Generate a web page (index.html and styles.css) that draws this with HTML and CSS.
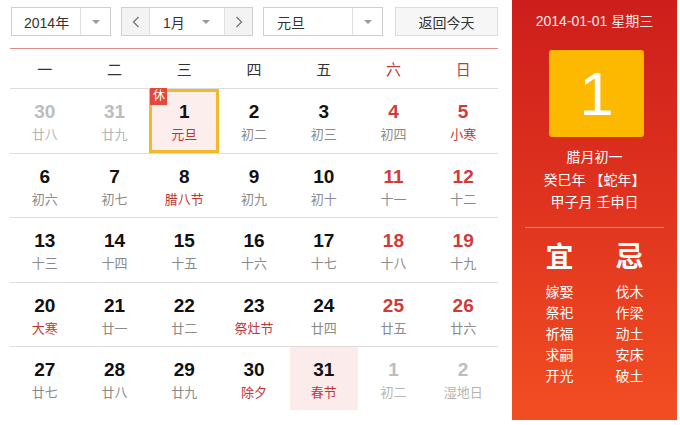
FILE: index.html
```html
<!DOCTYPE html>
<html lang="zh">
<head>
<meta charset="utf-8">
<title>万年历</title>
<link rel="stylesheet" href="styles.css">
</head>
<body>
<div class="page">
  <div class="main">
    <div class="toolbar">
      <div class="select year">
        <span class="sel-text">2014年</span>
        <span class="sel-arrow"><i class="tri"></i></span>
      </div>
      <div class="month-group">
        <span class="nav"><svg width="8" height="12" viewBox="0 0 8 12"><polyline points="6.5,1 1.5,6 6.5,11" fill="none" stroke="#777" stroke-width="1.3"/></svg></span>
        <span class="month-text">1月</span>
        <span class="month-arrow"><i class="tri"></i></span>
        <span class="nav"><svg width="8" height="12" viewBox="0 0 8 12"><polyline points="1.5,1 6.5,6 1.5,11" fill="none" stroke="#777" stroke-width="1.3"/></svg></span>
      </div>
      <div class="select holiday">
        <span class="sel-text">元旦</span>
        <span class="sel-arrow"><i class="tri"></i></span>
      </div>
      <button class="today-btn">返回今天</button>
    </div>

    <div class="weekdays">
      <span>一</span><span>二</span><span>三</span><span>四</span><span>五</span><span class="wk-red">六</span><span class="wk-red">日</span>
    </div>

    <div class="grid">
      <div class="row">
        <div class="cell other"><b>30</b><em>廿八</em></div>
        <div class="cell other"><b>31</b><em>廿九</em></div>
        <div class="cell today"><span class="badge">休</span><b>1</b><em class="fest">元旦</em></div>
        <div class="cell"><b>2</b><em>初二</em></div>
        <div class="cell"><b>3</b><em>初三</em></div>
        <div class="cell weekend"><b>4</b><em>初四</em></div>
        <div class="cell weekend"><b>5</b><em class="fest">小寒</em></div>
      </div>
      <div class="row">
        <div class="cell"><b>6</b><em>初六</em></div>
        <div class="cell"><b>7</b><em>初七</em></div>
        <div class="cell"><b>8</b><em class="fest">腊八节</em></div>
        <div class="cell"><b>9</b><em>初九</em></div>
        <div class="cell"><b>10</b><em>初十</em></div>
        <div class="cell weekend"><b>11</b><em>十一</em></div>
        <div class="cell weekend"><b>12</b><em>十二</em></div>
      </div>
      <div class="row">
        <div class="cell"><b>13</b><em>十三</em></div>
        <div class="cell"><b>14</b><em>十四</em></div>
        <div class="cell"><b>15</b><em>十五</em></div>
        <div class="cell"><b>16</b><em>十六</em></div>
        <div class="cell"><b>17</b><em>十七</em></div>
        <div class="cell weekend"><b>18</b><em>十八</em></div>
        <div class="cell weekend"><b>19</b><em>十九</em></div>
      </div>
      <div class="row">
        <div class="cell"><b>20</b><em class="fest">大寒</em></div>
        <div class="cell"><b>21</b><em>廿一</em></div>
        <div class="cell"><b>22</b><em>廿二</em></div>
        <div class="cell"><b>23</b><em class="fest">祭灶节</em></div>
        <div class="cell"><b>24</b><em>廿四</em></div>
        <div class="cell weekend"><b>25</b><em>廿五</em></div>
        <div class="cell weekend"><b>26</b><em>廿六</em></div>
      </div>
      <div class="row last">
        <div class="cell"><b>27</b><em>廿七</em></div>
        <div class="cell"><b>28</b><em>廿八</em></div>
        <div class="cell"><b>29</b><em>廿九</em></div>
        <div class="cell"><b>30</b><em class="fest">除夕</em></div>
        <div class="cell holiday-cell"><b>31</b><em class="fest">春节</em></div>
        <div class="cell other"><b>1</b><em>初二</em></div>
        <div class="cell other"><b>2</b><em>湿地日</em></div>
      </div>
    </div>
  </div>

  <aside class="side">
    <div class="side-date">2014-01-01 星期三</div>
    <div class="big-day">1</div>
    <div class="lunar">
      <div>腊月初一</div>
      <div>癸巳年 【蛇年】</div>
      <div>甲子月 壬申日</div>
    </div>
    <div class="divider"></div>
    <div class="yiji">
      <div class="col">
        <div class="yj-title">宜</div>
        <div>嫁娶</div><div>祭祀</div><div>祈福</div><div>求嗣</div><div>开光</div>
      </div>
      <div class="col">
        <div class="yj-title">忌</div>
        <div>伐木</div><div>作梁</div><div>动土</div><div>安床</div><div>破土</div>
      </div>
    </div>
  </aside>
</div>
</body>
</html>
```

FILE: styles.css
```css
* { box-sizing: border-box; }
html, body { margin: 0; padding: 0; background: #fff; }
body {
  width: 680px;
  height: 425px;
  overflow: hidden;
  font-family: "Liberation Sans", "Noto Sans CJK SC", sans-serif;
  color: #222;
}
.page {
  display: flex;
  padding-left: 10px;
}
.main { width: 488px; }

/* toolbar */
.toolbar {
  display: flex;
  align-items: stretch;
  padding-top: 7px;
  height: 36px;
  padding-left: 1px;
}
.select {
  display: flex;
  border: 1px solid #cfcfcf;
  background: #fff;
  font-size: 14px;
  color: #333;
}
.select.year { width: 100px; margin-right: 10px; }
.select.holiday { width: 120px; margin-right: 12px; }
.sel-text {
  flex: 1;
  display: flex;
  align-items: center;
  padding-left: 10px;
}
.year .sel-text { padding-left: 12px; }
.holiday .sel-text { padding-left: 13px; }
.sel-arrow {
  width: 30px;
  border-left: 1px solid #e0e0e0;
  display: flex;
  align-items: center;
  justify-content: center;
}
.tri {
  width: 0; height: 0;
  border-left: 4px solid transparent;
  border-right: 4px solid transparent;
  border-top: 4px solid #999;
}
.month-group {
  width: 132px;
  margin-right: 10px;
  display: flex;
  border: 1px solid #cfcfcf;
  font-size: 14px;
  color: #333;
}
.nav {
  width: 28px;
  background: #f3f3f3;
  display: flex;
  align-items: center;
  justify-content: center;
}
.nav:first-child { border-right: 1px solid #e0e0e0; }
.nav:last-child { border-left: 1px solid #e0e0e0; }
.month-text {
  flex: 1;
  display: flex;
  align-items: center;
  padding-left: 13px;
}
.month-arrow {
  width: 22px;
  display: flex;
  align-items: center;
  justify-content: flex-start;
}
.today-btn {
  width: 103px;
  border: 1px solid #dcdcdc;
  background: #f6f6f6;
  font-family: inherit;
  font-size: 14px;
  color: #333;
  padding: 0;
}

/* weekdays */
.weekdays {
  margin-top: 12px;
  border-top: 1px solid #dd8c8c;
  height: 40px;
  display: grid;
  grid-template-columns: repeat(7, 1fr);
  align-items: center;
  font-size: 15px;
  color: #333;
  text-align: center;
}
.wk-red { color: #c43a3a; }

/* grid */
.row {
  height: 64.5px;
  border-top: 1px solid #dcdcdc;
  display: grid;
  grid-template-columns: repeat(7, 1fr);
}
.cell {
  position: relative;
  display: flex;
  flex-direction: column;
  align-items: center;
  padding-top: 12px;
}
.cell b {
  font-size: 19px;
  line-height: 22px;
  font-weight: bold;
  color: #111;
}
.cell em {
  font-style: normal;
  font-size: 13px;
  line-height: 16px;
  margin-top: 4px;
  color: #8a8a8a;
}
.cell em.fest { color: #c23535; }
.cell.weekend b { color: #d03a3a; }
.cell.other b { color: #bdbdbd; }
.cell.other em { color: #b5b5b5; }
.cell.today {
  background: #fdeeee;
  box-shadow: inset 0 0 0 3px #f2b92c;
}
.cell.holiday-cell {
  background: #fcebeb;
  margin: 0 1px 1px 1px;
}
.badge {
  position: absolute;
  top: -1px;
  left: 1px;
  width: 17px;
  height: 17px;
  background: #e5483a;
  color: #fff;
  font-size: 12px;
  line-height: 17px;
  text-align: center;
}

/* side panel */
.side {
  margin-left: 14px;
  width: 165px;
  height: 420px;
  background: linear-gradient(to bottom, #cd1e1b 0%, #e0341f 50%, #f24e22 100%);
  color: #fff;
  display: flex;
  flex-direction: column;
  align-items: center;
}
.side-date {
  margin-top: 12px;
  font-size: 14px;
  line-height: 18px;
  color: #fbeaea;
}
.big-day {
  margin-top: 20px;
  width: 95px;
  height: 87px;
  background: #fdb900;
  border-radius: 3px;
  font-size: 62px;
  line-height: 87px;
  text-align: center;
  color: #fff;
  margin-left: 4px;
}
.lunar {
  margin-top: 9px;
  font-size: 14px;
  line-height: 22.5px;
  text-align: center;
}
.divider {
  margin-top: 13px;
  width: 139px;
  border-top: 1px solid #f2857a;
}
.yiji {
  margin-top: 14px;
  display: flex;
  gap: 42px;
  font-size: 14px;
  line-height: 21px;
  text-align: center;
}
.yj-title {
  font-size: 28px;
  line-height: 32px;
  font-weight: bold;
  margin-bottom: 8px;
}
```
